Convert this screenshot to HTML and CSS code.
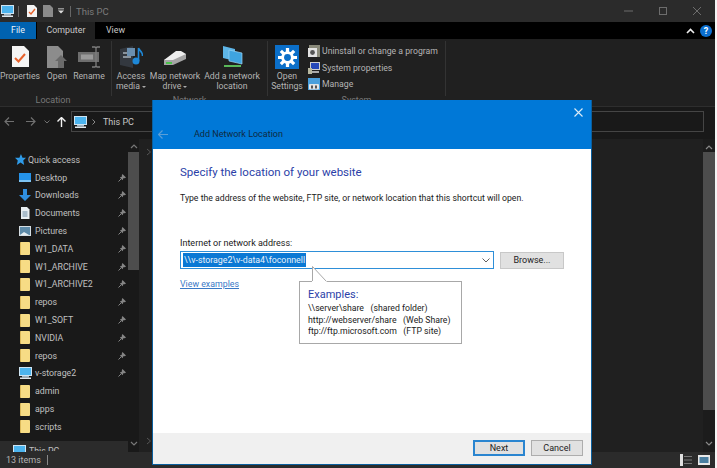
FILE: index.html
```html
<!DOCTYPE html>
<html lang="en">
<head>
    <meta charset="UTF-8">
    <title>This PC</title>
    <link rel="stylesheet" href="styles.css">
</head>
<body>
<svg class="defs" width="0" height="0">
    <symbol id="pc" viewBox="0 0 13 12"><rect x="0.5" y="0.5" width="12" height="8" fill="#4cb4ee" stroke="#cfe4f2"/><rect x="3" y="9" width="7" height="1.5" fill="#9fb5c4"/><rect x="1" y="10.5" width="11" height="1.5" fill="#dfe8ee"/></symbol>
    <symbol id="pin" viewBox="0 0 8 8"><path d="M4.5 0L8 3.5 6.8 4.2 5.6 4 4.6 6.2 1.900 3.400 4 2.400 3.800 1.200z" fill="#858585"/><path d="M3 5L.5 7.500" stroke="#858585"/></symbol>
</svg>
<div class="explorer">
    <!-- title bar -->
    <div class="titlebar">
        <svg class="qa-pc"><use href="#pc"/></svg>
        <span class="qa-sep"></span>
        <svg class="qa-doc" viewBox="0 0 10 12"><path d="M0 0h7l3 3v9H0z" fill="#f4f4f4"/><path d="M2 7l2 2 4-5" fill="none" stroke="#e8622c" stroke-width="1.4"/></svg>
        <svg class="qa-doc2" viewBox="0 0 10 12"><path d="M0 0h7l3 3v9H0z" fill="#8b8b8b"/></svg>
        <svg class="qa-drop" viewBox="0 0 7 6"><rect y="0" width="7" height="1" fill="#ddd"/><path d="M0 2.500h7L3.500 6z" fill="#ddd"/></svg>
        <span class="qa-sep qa-sep2"></span>
        <span class="title-text">This PC</span>
        <div class="win-btns">
            <svg viewBox="0 0 10 10"><path d="M0 5h9" stroke="#6d6d6d"/></svg>
            <svg viewBox="0 0 10 10"><rect x="1.5" y="1.5" width="7" height="7" fill="none" stroke="#6d6d6d"/></svg>
            <svg viewBox="0 0 10 10"><path d="M1 1l8 8M9 1l-8 8" stroke="#6d6d6d"/></svg>
        </div>
    </div>

    <!-- tabs -->
    <div class="tabs">
        <div class="tab tab-file">File</div>
        <div class="tab tab-active">Computer</div>
        <div class="tab tab-view">View</div>
        <div class="tabs-right">
            <svg class="collapse" viewBox="0 0 9 6"><path d="M1 5l3.500-3.500L8 5" fill="none" stroke="#eee" stroke-width="1.6"/></svg>
            <span class="help">?</span>
        </div>
    </div>

    <!-- ribbon -->
    <div class="ribbon">
        <div class="group group-location">
            <div class="group-items">
                <div class="big-btn btn-props">
                    <svg viewBox="0 0 17 24" width="17" height="24"><path d="M0 1h12l5 5v16H0z" fill="#f5f5f5"/><path d="M3 13l3.500 3.500L13 9" fill="none" stroke="#e8622c" stroke-width="2"/></svg>
                    <span>Properties</span>
                </div>
                <div class="big-btn btn-open">
                    <svg viewBox="0 0 20 24" width="20" height="24"><path d="M0 1h11l5 5v17H0z" fill="#8c8c8c"/><path d="M14 10l6 6h-3v7h-6v-7H8z" fill="#6a6a6a"/></svg>
                    <span>Open</span>
                </div>
                <div class="big-btn btn-rename">
                    <svg viewBox="0 0 22 24" width="22" height="24"><rect x="0" y="7" width="21" height="10" fill="#6e6e6e"/><rect x="3" y="9.500" width="12" height="5" fill="#9a9a9a"/><path d="M14 2h3l1 1 1-1h3M18 3v18M14 22h3l1-1 1 1h3" fill="none" stroke="#7d7d7d" stroke-width="1.3"/></svg>
                    <span>Rename</span>
                </div>
            </div>
            <div class="group-label">Location</div>
        </div>
        <div class="group group-network">
            <div class="group-items">
                <div class="big-btn btn-media">
                    <svg viewBox="0 0 24 24" width="24" height="24"><path d="M1 4l13-3v22L1 20z" fill="#33383f"/><rect x="4" y="7" width="8" height="2" fill="#8a939c"/><rect x="4" y="11" width="8" height="2" fill="#8a939c"/><rect x="8" y="3" width="8" height="8" fill="#6a8fb0"/><circle cx="17" cy="16" r="3.500" fill="#1e88d8"/><path d="M19.500 16V3c1 3 4 3 4 8" fill="none" stroke="#1e88d8" stroke-width="1.6"/></svg>
                    <span>Access<br>media <i class="caret"></i></span>
                </div>
                <div class="big-btn btn-map">
                    <svg viewBox="0 0 24 24" width="24" height="24"><path d="M1 15l12-6h10v5L10 20H1z" fill="#a5a5a5"/><path d="M1 15h9l13-6-5-3h-5z" fill="#eeeeee"/><path d="M3 18h6" stroke="#4cc24c" stroke-width="2"/></svg>
                    <span>Map network<br>drive <i class="caret"></i></span>
                </div>
                <div class="big-btn btn-add">
                    <svg viewBox="0 0 24 24" width="24" height="24"><path d="M3 1l12 3v12L3 13z" fill="#5eb6e8"/><path d="M9 5l13 3v11L9 16z" fill="#3fa4e0" stroke="#9bd4f3" stroke-width="0.7"/><path d="M4 21h17" stroke="#59b859" stroke-width="2"/></svg>
                    <span>Add a network<br>location</span>
                </div>
            </div>
            <div class="group-label">Network</div>
        </div>
        <div class="group group-system">
            <div class="group-items">
                <div class="big-btn btn-settings">
                    <div class="settings-tile">
                        <svg viewBox="0 0 20 20" width="19" height="19"><g stroke="#fff" stroke-width="3.400"><path d="M10 0v20M0 10h20M3 3l14 14M17 3L3 17"/></g><circle cx="10" cy="10" r="6.600" fill="#fff"/><circle cx="10" cy="10" r="3.600" fill="#0b6fc9"/></svg>
                    </div>
                    <span>Open<br>Settings</span>
                </div>
                <div class="small-btns">
                    <div class="small-btn">
                        <svg viewBox="0 0 12 12" width="12" height="12"><rect x="1" y="0" width="11" height="12" fill="#8a8a7a"/><rect x="0" y="3" width="9" height="9" fill="#e3e3e3"/><circle cx="4.500" cy="7.500" r="2.400" fill="#555"/></svg>
                        <span>Uninstall or change a program</span>
                    </div>
                    <div class="small-btn">
                        <svg viewBox="0 0 12 12" width="12" height="12"><rect x="2" y="0" width="10" height="8" fill="#cfcfcf"/><rect x="3" y="1" width="8" height="6" fill="#2648b8"/><rect x="0" y="6" width="4" height="6" fill="#b7b7a0"/><rect x="4" y="9" width="7" height="2" fill="#aaa"/></svg>
                        <span>System properties</span>
                    </div>
                    <div class="small-btn">
                        <svg viewBox="0 0 12 12" width="12" height="12"><rect x="0" y="0" width="12" height="12" fill="#4a9fdc"/><rect x="1" y="6" width="10" height="5.500" rx="1" fill="#e4e4e4"/><rect x="3" y="7.500" width="2" height="3" fill="#555"/><rect x="7" y="7.500" width="2" height="3" fill="#555"/></svg>
                        <span>Manage</span>
                    </div>
                </div>
            </div>
            <div class="group-label">System</div>
        </div>
    </div>

    <!-- address bar -->
    <div class="addressbar">
        <svg class="nav nav-back" viewBox="0 0 10 9"><path d="M5 .5L1 4.500l4 4M1 4.500h9" fill="none" stroke="#707070" stroke-width="1.2"/></svg>
        <svg class="nav nav-fwd" viewBox="0 0 10 9"><path d="M5 .5l4 4-4 4M9 4.500H0" fill="none" stroke="#707070" stroke-width="1.2"/></svg>
        <svg class="nav nav-down" viewBox="0 0 6 4"><path d="M.5.5L3 3 5.500.5" fill="none" stroke="#707070"/></svg>
        <svg class="nav nav-up" viewBox="0 0 9 10"><path d="M.5 4.500l4-4 4 4M4.500 1v9" fill="none" stroke="#f2f2f2" stroke-width="1.4"/></svg>
        <div class="address-box">
            <svg width="13" height="12"><use href="#pc"/></svg>
            <svg class="crumb" viewBox="0 0 4 6"><path d="M.5.5L3 3 .5 5.500" fill="none" stroke="#8a8a8a"/></svg>
            <span>This PC</span>
        </div>
    </div>

    <!-- navigation pane and file list -->
    <div class="content">
        <div class="sidebar">
            <div class="tree">
                <div class="tree-row quick"><svg viewBox="0 0 12 12" width="11" height="11"><path d="M6.500 0l1.700 4H12L9 7l1 5-4-2.700L2 12l1-5-3-3h4.800z" fill="#2f9be8"/></svg><span>Quick access</span></div>
                <div class="tree-row"><i class="ico"></i><span>Desktop</span><svg class="pin"><use href="#pin"/></svg></div>
                <div class="tree-row"><svg class="ico-svg" viewBox="0 0 12 12"><path d="M4 0h4v6h4l-6 6-6-6h4z" fill="#2f8fe0"/></svg><span>Downloads</span><svg class="pin"><use href="#pin"/></svg></div>
                <div class="tree-row"><svg class="ico-svg" viewBox="0 0 12 12"><path d="M2 0h6l2.500 2.500V12H2z" fill="#e8eef2"/><path d="M3.500 5h5M3.500 7h5M3.500 9h5" stroke="#6b8ba4"/></svg><span>Documents</span><svg class="pin"><use href="#pin"/></svg></div>
                <div class="tree-row"><svg class="ico-svg" viewBox="0 0 12 12"><rect y="1" width="12" height="10" fill="#d5dde2"/><rect x="1" y="2" width="10" height="8" fill="#5d8aa8"/><path d="M1 10l4-3 5 3z" fill="#e6eef2"/></svg><span>Pictures</span><svg class="pin"><use href="#pin"/></svg></div>
                <div class="tree-row"><i class="folder"></i><span>W1_DATA</span><svg class="pin"><use href="#pin"/></svg></div>
                <div class="tree-row"><i class="folder"></i><span>W1_ARCHIVE</span><svg class="pin"><use href="#pin"/></svg></div>
                <div class="tree-row"><i class="folder"></i><span>W1_ARCHIVE2</span><svg class="pin"><use href="#pin"/></svg></div>
                <div class="tree-row"><i class="folder"></i><span>repos</span><svg class="pin"><use href="#pin"/></svg></div>
                <div class="tree-row"><i class="folder"></i><span>W1_SOFT</span><svg class="pin"><use href="#pin"/></svg></div>
                <div class="tree-row"><i class="folder"></i><span>NVIDIA</span><svg class="pin"><use href="#pin"/></svg></div>
                <div class="tree-row"><i class="folder"></i><span>repos</span><svg class="pin"><use href="#pin"/></svg></div>
                <div class="tree-row"><svg class="ico-svg ico-pc"><use href="#pc"/></svg><span>v-storage2</span><svg class="pin"><use href="#pin"/></svg></div>
                <div class="tree-row"><i class="folder"></i><span>admin</span></div>
                <div class="tree-row"><i class="folder"></i><span>apps</span></div>
                <div class="tree-row"><i class="folder"></i><span>scripts</span></div>
                <div class="tree-row this-pc"><svg class="ico-svg ico-pc"><use href="#pc"/></svg><span>This PC</span></div>
            </div>
            <div class="sb-track">
                <svg viewBox="0 0 8 5"><path d="M1 4l3-3 3 3" fill="none" stroke="#777" stroke-width="1.2"/></svg>
                <div class="sb-thumb"></div>
                <svg class="sb-down" viewBox="0 0 8 5"><path d="M1 1l3 3 3-3" fill="none" stroke="#777" stroke-width="1.2"/></svg>
            </div>
        </div>
        <div class="main-pane">
            <svg class="expander first" viewBox="0 0 6 8"><path d="M1 1l3.500 3L1 7" fill="none" stroke="#555"/></svg>
            <svg class="expander second" viewBox="0 0 6 8"><path d="M1 1l3.500 3L1 7" fill="none" stroke="#555"/></svg>
        </div>
        <div class="main-scroll">
            <svg viewBox="0 0 8 5"><path d="M1 4l3-3 3 3" fill="none" stroke="#888" stroke-width="1.2"/></svg>
            <div class="main-thumb"></div>
            <svg class="sb-down" viewBox="0 0 8 5"><path d="M1 1l3 3 3-3" fill="none" stroke="#888" stroke-width="1.2"/></svg>
        </div>
    </div>

    <!-- status bar -->
    <div class="statusbar">
        <span>13 items</span><span class="status-sep"></span>
        <div class="view-btns">
            <svg viewBox="0 0 12 12" width="12" height="12"><rect width="3" height="12" fill="#e0e0e0"/><path d="M4 2.500h8M4 6h8M4 9.500h8" stroke="#777"/></svg>
            <svg viewBox="0 0 12 12" width="12" height="12"><rect y="1" width="12" height="10" fill="#e8e8e8"/><rect x="1.500" y="3" width="9" height="6" fill="#4a7ea0"/></svg>
        </div>
    </div>
</div>

<!-- the wizard lies over the explorer window -->
<div class="dialog">
    <div class="dialog-head">
        <svg class="close-x" viewBox="0 0 9 9"><path d="M.5.5l8 8M8.500.5l-8 8" stroke="#dcecf8" stroke-width="1.1"/></svg>
        <div class="head-row">
            <svg class="back-arrow" viewBox="0 0 10 9"><path d="M4.500.5l-4 4 4 4M1 4.500h9" fill="none" stroke="#5a9fd8" stroke-width="1.2"/></svg>
            <span class="dialog-title">Add Network Location</span>
        </div>
    </div>
    <div class="dialog-body">
        <h1>Specify the location of your website</h1>
        <p class="intro">Type the address of the website, FTP site, or network location that this shortcut will open.</p>
        <label>Internet or network address:</label>
        <div class="address-row">
            <div class="combo">
                <span class="selected">\\v-storage2\v-data4\foconnell</span>
                <svg class="combo-arrow" viewBox="0 0 8 5"><path d="M.5.500L4 4 7.500.500" fill="none" stroke="#606060"/></svg>
            </div>
            <button class="btn btn-browse">Browse...</button>
        </div>
        <a class="view-examples">View examples</a>
        <div class="tip">
            <svg class="tip-tail" viewBox="0 0 15 16"><path d="M0 16V0l15 16" fill="#fff"/><path d="M.5 15V.5L14 15" fill="none" stroke="#a8a8a8"/></svg>
            <div class="tip-title">Examples:</div>
            <div class="tip-line">\\server\share &nbsp; (shared folder)</div>
            <div class="tip-line">http://webserver/share &nbsp; (Web Share)</div>
            <div class="tip-line">ftp://ftp.microsoft.com &nbsp; (FTP site)</div>
        </div>
    </div>
    <div class="dialog-foot">
        <button class="btn btn-next">Next</button>
        <button class="btn">Cancel</button>
    </div>
</div>
</body>
</html>
```

FILE: styles.css
```css
html, body {
    margin: 0;
    padding: 0;
    width: 717px;
    height: 468px;
    overflow: hidden;
    background: #f4f4f4;
    font-family: Roboto, "Liberation Sans", sans-serif;
}
.defs { position: absolute; }
.explorer {
    width: 715px;
    height: 468px;
    display: flex;
    flex-direction: column;
    background: #202020;
    color: #d0d0d0;
    font-size: 9px;
}

/* title bar */
.titlebar {
    height: 22px;
    flex: none;
    display: flex;
    align-items: center;
    background: #2b2b2b;
}
.qa-pc { width: 13px; height: 12px; margin-left: 1px; }
.qa-sep { width: 1px; height: 11px; background: #666; margin-left: 4px; }
.qa-doc { width: 10px; height: 12px; margin-left: 8px; }
.qa-doc2 { width: 10px; height: 12px; margin-left: 6px; }
.qa-drop { width: 6px; height: 6px; margin-left: 5px; }
.qa-sep2 { margin-left: 6px; }
.title-text { margin-left: 5px; font-size: 9.5px; color: #7c7c7c; }
.win-btns {
    margin-left: auto;
    margin-right: 13px;
    display: flex;
    gap: 24px;
}
.win-btns svg { width: 10px; height: 10px; }

/* tabs */
.tabs {
    height: 17px;
    flex: none;
    display: flex;
    background: #000;
    font-size: 8.8px;
    line-height: 17px;
}
.tab { text-align: center; }
.tab-file { width: 36px; background: #0062b0; color: #eaf2f8; margin-right: 1px; }
.tab-active { width: 58px; background: #202020; color: #c8c8c8; }
.tab-view { width: 41px; color: #c8c8c8; }
.tabs-right {
    margin-left: auto;
    margin-right: 3px;
    display: flex;
    align-items: center;
    gap: 5px;
}
.collapse { width: 9px; height: 6px; }
.help {
    width: 12px;
    height: 12px;
    border-radius: 6px;
    background: #0b6fd0;
    color: #fff;
    font-size: 9px;
    font-weight: bold;
    line-height: 12px;
    text-align: center;
}

/* ribbon */
.ribbon {
    height: 68px;
    flex: none;
    display: flex;
    box-sizing: border-box;
    background: #202020;
    border-bottom: 1px solid #2e2e2e;
    font-size: 8.7px;
    color: #b4b4b4;
}
.group {
    margin-top: 2px;
    height: 55px;
    border-right: 1px solid #333;
    text-align: center;
}
.group-location { width: 111px; }
.group-network { width: 155px; }
.group-system { width: 177px; }
.group-items {
    display: flex;
    height: 55px;
    padding-top: 4px;
    box-sizing: border-box;
}
.group-label {
    height: 12px;
    margin-top: -2px;
    line-height: 12px;
    color: #787878;
    font-size: 9px;
}
.group-location .group-label { padding-right: 5px; }
.big-btn {
    flex: none;
    display: flex;
    flex-direction: column;
    align-items: center;
    line-height: 10px;
    white-space: nowrap;
}
.big-btn > svg { display: block; margin-bottom: 2px; }
.btn-props { width: 40px; }
.btn-open { width: 34px; }
.btn-rename { width: 30px; }
.btn-media { width: 38px; }
.btn-map { width: 50px; }
.btn-add { width: 64px; }
.btn-settings { width: 38px; }
.settings-tile {
    width: 24px;
    height: 24px;
    background: #0b6fc9;
    display: flex;
    align-items: center;
    justify-content: center;
    margin-bottom: 2px;
}
.caret {
    display: inline-block;
    border: 2px solid transparent;
    border-top: 2px solid #aaa;
    border-bottom: 0;
    vertical-align: middle;
}
.small-btns {
    margin-left: 2px;
    display: flex;
    flex-direction: column;
    gap: 4.5px;
}
.small-btn {
    display: flex;
    align-items: center;
    gap: 2px;
    height: 12px;
    white-space: nowrap;
}

/* address bar */
.addressbar {
    height: 32px;
    flex: none;
    display: flex;
    align-items: flex-start;
    background: #191919;
    padding-top: 4px;
    box-sizing: border-box;
}
.nav { flex: none; margin-top: 6px; }
.nav-back { width: 10px; height: 9px; margin-left: 4px; }
.nav-fwd { width: 10px; height: 9px; margin-left: 12px; }
.nav-down { width: 6px; height: 4px; margin-left: 8px; margin-top: 9px; }
.nav-up { width: 9px; height: 10px; margin-left: 7px; }
.address-box {
    margin-left: 5px;
    width: 633px;
    height: 21px;
    box-sizing: border-box;
    border: 1px solid #454545;
    background: #191919;
    display: flex;
    align-items: center;
    padding-left: 2px;
    color: #c8c8c8;
}
.crumb { width: 4px; height: 6px; margin: 0 7px 0 5px; }

/* sidebar and list */
.content {
    flex: 1;
    min-height: 0;
    display: flex;
    background: #202020;
}
.sidebar {
    width: 139px;
    flex: none;
    display: flex;
    background: #191919;
    margin-right: 2px;
    overflow: hidden;
}
.tree {
    flex: 1;
    padding-top: 12px;
    overflow: hidden;
}
.tree-row {
    height: 17.8px;
    display: flex;
    align-items: center;
    padding-left: 19px;
    font-size: 8.8px;
    color: #c0c0c0;
    white-space: nowrap;
    box-sizing: border-box;
}
.tree-row > span { margin-left: 3px; flex: 1; }
.quick { padding-left: 15px; }
.quick span { margin-left: 2px; }
.ico-svg { width: 12px; height: 12px; flex: none; margin-right: 1px; }
.ico-pc { width: 13px; margin-right: 0; }
.ico {
    flex: none;
    width: 12px;
    height: 7px;
    background: #2592e8;
    border-bottom: 2px solid #7fc4f2;
    margin-right: 1px;
}
.folder {
    flex: none;
    width: 10px;
    height: 13px;
    margin-left: 1px;
    margin-right: 1px;
    background: #f7dc85;
    border-left: 1px solid #dcb95a;
    border-radius: 1px;
    box-sizing: border-box;
}
.folder + span { margin-left: 4px; }
.pin { flex: none; width: 8px; height: 8px; margin-right: 2px; }

/* last row is cut by the status bar */
.this-pc {
    margin-top: 5px;
    height: 11px;
    padding-left: 13px;
    background: #2b2b2b;
    align-items: flex-start;
    overflow: hidden;
}
.this-pc .ico-svg { margin-top: 4px; }
.tree-row.this-pc span { margin-top: 4px; height: 6px; line-height: 12px; overflow: hidden; }

.sb-track {
    width: 11px;
    flex: none;
    background: #191919;
    display: flex;
    flex-direction: column;
    align-items: center;
    padding-top: 5px;
    box-sizing: border-box;
}
.sb-track svg, .main-scroll svg { width: 8px; height: 5px; flex: none; }
.sb-thumb {
    width: 11px;
    height: 118px;
    margin-top: 3px;
    background: #4d4d4d;
}
.sb-down { margin-top: auto; margin-bottom: 6px; }
.main-pane {
    flex: 1;
    display: flex;
    flex-direction: column;
    padding-left: 5px;
}
.expander { width: 6px; height: 8px; flex: none; }
.expander.first { margin-top: 9px; }
.expander.second { margin-top: 281px; }
.main-scroll {
    width: 12px;
    flex: none;
    background: #1c1c1c;
    display: flex;
    flex-direction: column;
    align-items: center;
    padding-top: 6px;
    box-sizing: border-box;
}
.main-thumb {
    width: 12px;
    height: 258px;
    margin-top: 2px;
    background: #4d4d4d;
}

/* status bar */
.statusbar {
    height: 16px;
    flex: none;
    display: flex;
    align-items: center;
    background: #2b2b2b;
    color: #b4b4b4;
    padding-left: 6px;
}
.status-sep { width: 1px; height: 10px; background: #888; margin-left: 6px; }
.view-btns { margin-left: auto; margin-right: 5px; display: flex; gap: 6px; }

/* wizard */
.dialog {
    position: absolute;
    left: 152px;
    top: 100px;
    width: 440px;
    height: 365px;
    box-sizing: border-box;
    border: 1px solid #0a5f9e;
    border-top: 0;
    background: #fff;
    display: flex;
    flex-direction: column;
    color: #1a1a1a;
    font-size: 9px;
}
.dialog-head {
    height: 49px;
    flex: none;
    background: #0078d7;
    position: relative;
}
.close-x {
    position: absolute;
    right: 8px;
    top: 8px;
    width: 9px;
    height: 9px;
}
.head-row {
    display: flex;
    align-items: center;
    padding: 29px 0 0 5px;
}
.back-arrow { width: 10px; height: 9px; }
.dialog-title { margin-left: 26px; color: #0f2a42; }
.dialog-body {
    flex: 1;
    padding: 15px 27px 0;
    position: relative;
}
h1 {
    margin: 0;
    font-size: 11.5px;
    font-weight: normal;
    color: #2b3fa8;
    line-height: 16px;
}
.intro { margin: 12px 0 0; font-size: 8.7px; line-height: 12px; }
label { display: block; margin-top: 33px; line-height: 12px; }
.address-row {
    display: flex;
    align-items: center;
    margin-top: 2px;
}
.combo {
    width: 314px;
    height: 18px;
    box-sizing: border-box;
    border: 1px solid #2e8fd8;
    padding-left: 2px;
    display: flex;
    align-items: center;
    font-size: 8.8px;
    line-height: 14px;
}
.selected { background: #0a78d4; color: #e8f2fa; padding: 0 1px; }
.combo-arrow { width: 8px; height: 5px; margin-left: auto; margin-right: 3px; }
.btn {
    width: 52px;
    height: 16px;
    padding: 0;
    box-sizing: border-box;
    background: #e1e1e1;
    border: 1px solid #adadad;
    font: inherit;
    color: #222;
}
.btn-browse { width: 64px; height: 17px; margin-left: 6px; border-color: #c8c8c8; }
.btn-next { border: 2px solid #2a85d0; }
.view-examples {
    display: block;
    margin-top: 9px;
    width: max-content;
    font-size: 8.8px;
    color: #3a79c6;
    text-decoration: underline;
    line-height: 12px;
}
.tip {
    position: absolute;
    left: 146px;
    top: 132px;
    width: 163px;
    height: 63px;
    box-sizing: border-box;
    border: 1px solid #a8a8a8;
    background: #fff;
    padding: 5px 8px;
    line-height: 11.5px;
    font-size: 8.7px;
    white-space: nowrap;
}
.tip-tail {
    position: absolute;
    left: 12px;
    top: -16px;
    width: 15px;
    height: 16px;
}
.tip-title { font-size: 11px; color: #2b3fa8; line-height: 16px; }
.dialog-foot {
    height: 31px;
    flex: none;
    background: #f0f0f0;
    display: flex;
    align-items: center;
    justify-content: flex-end;
    gap: 6px;
    padding-right: 8px;
    padding-bottom: 1px;
    box-sizing: border-box;
}
```
